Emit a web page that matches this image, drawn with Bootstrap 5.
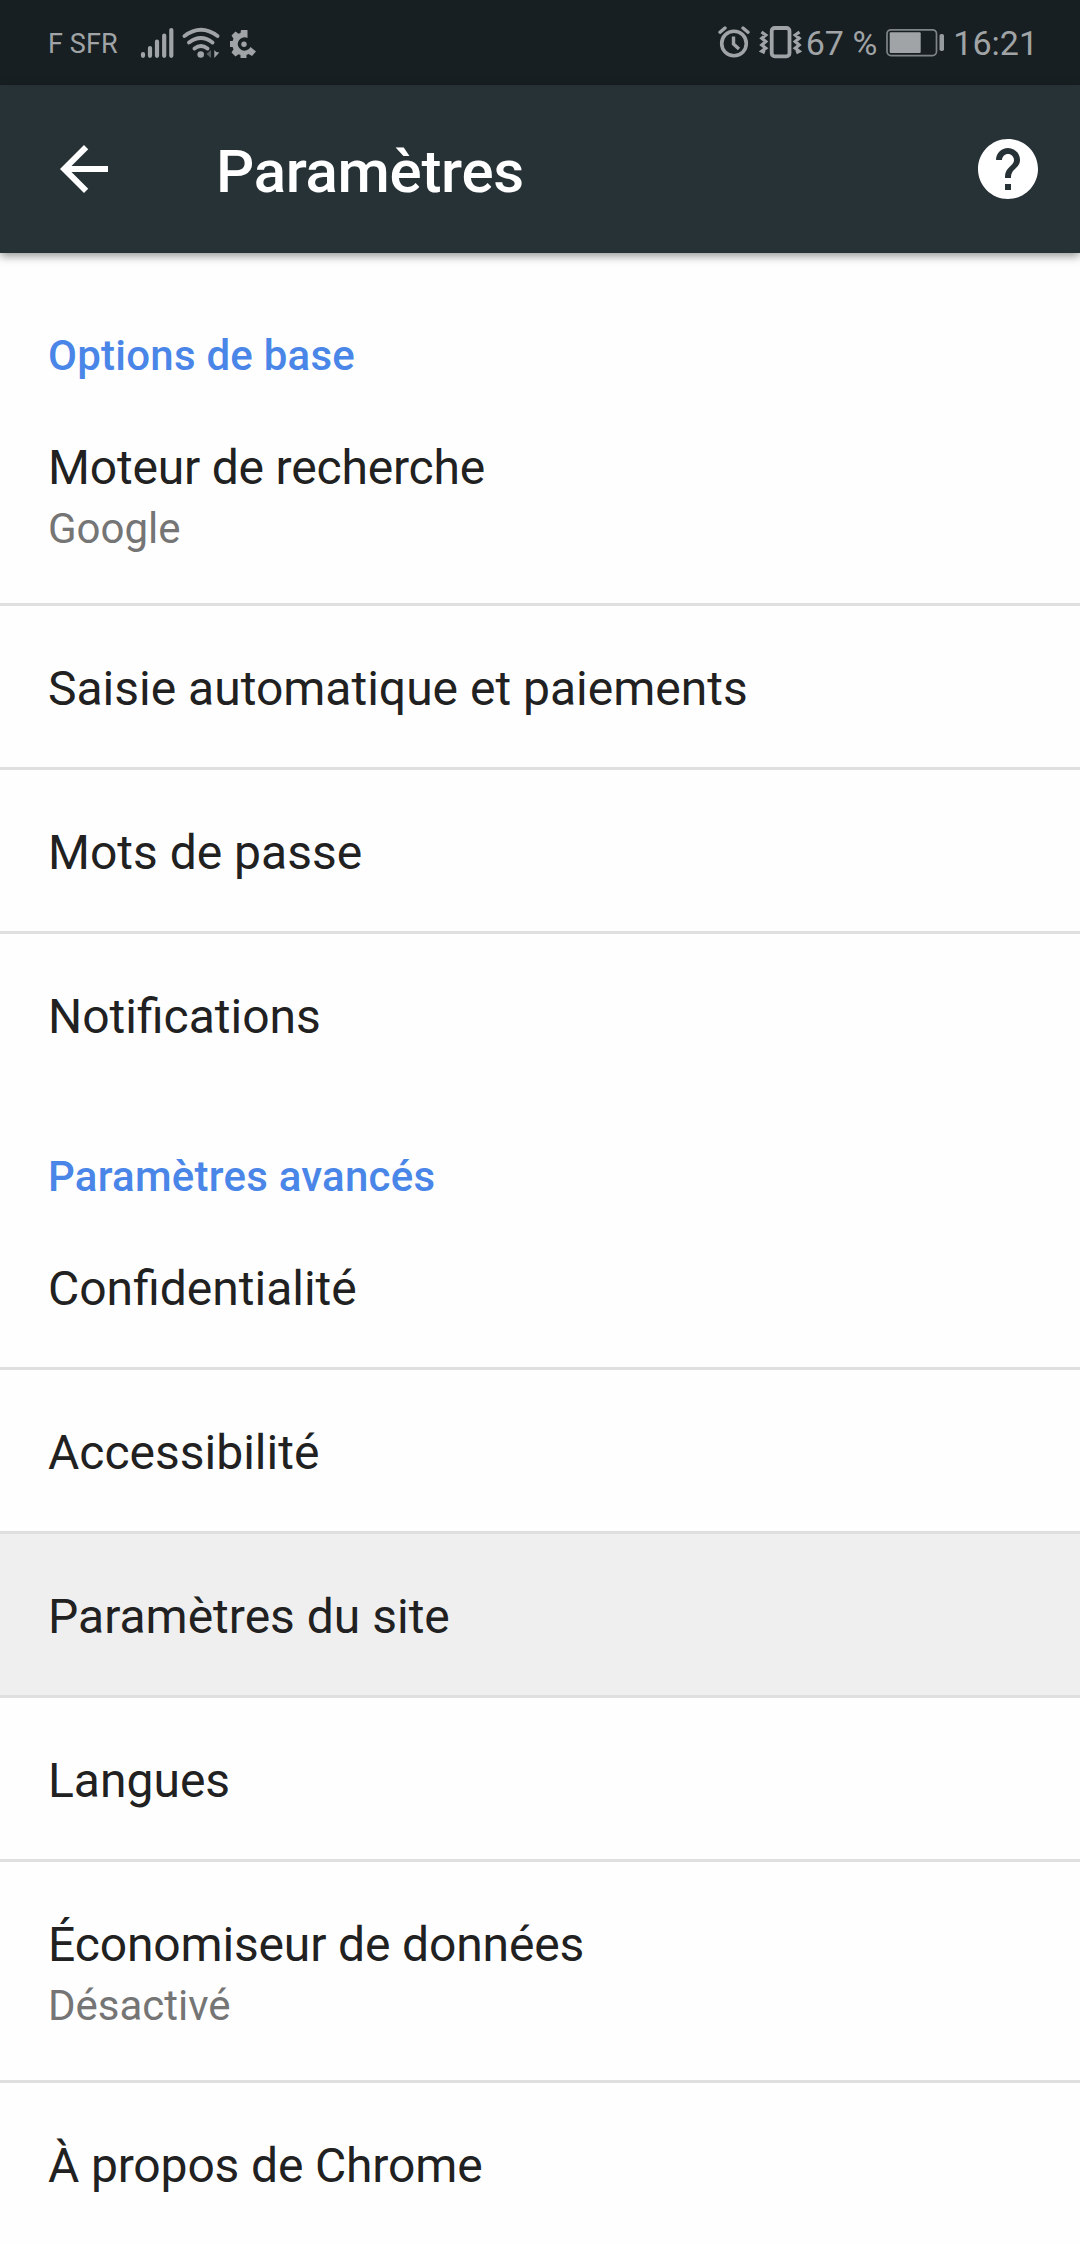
<!DOCTYPE html>
<html lang="fr">
<head>
<meta charset="utf-8">
<meta name="viewport" content="width=device-width, initial-scale=1">
<title>Paramètres</title>
<link href="https://cdn.jsdelivr.net/npm/bootstrap@5.3.0/dist/css/bootstrap.min.css" rel="stylesheet">
<style>
  body { font-family: Roboto, "Noto Sans", sans-serif; color: #212121; background: #fefefe; overflow: hidden; height: 2244px; }
  .statusbar { height: 85px; background: #181f22; color: #a0a4a6; padding: 0 42px 0 48px; }
  .statusbar svg { display: block; flex: none; }
  .carrier { font-size: 27px; line-height: 32px; width: 92px; padding-top: 2px; letter-spacing: .1px; }
  .stat-text { font-size: 34px; line-height: 40px; white-space: nowrap; }
  .vibrate { margin: 0 1px 0 6px; }
  .appbar { height: 168px; background: #273237; padding: 0 36px 0 48px; box-shadow: 0 3px 9px rgba(0,0,0,.42); z-index: 2; }
  .appbar svg { display: block; flex: none; }
  .appbar-title { font-size: 60px; font-weight: 500; line-height: 70px; letter-spacing: -.3px; margin: 5px auto 0 96px; }
  .section-title { font-size: 42px; font-weight: 500; line-height: 49px; letter-spacing: .24px; color: #4a86e8; padding: 78px 48px 5px; margin: 0; }
  .section-title.later { padding-top: 57px; }
  .settings .list-group-item { border: 0; border-bottom: 3px solid #dfdfdf; padding: 55px 48px 50px; background: transparent; color: #212121; font-size: 48px; line-height: 56px; }
  .settings .list-group-item:last-child { border-bottom: 0; }
  .settings .list-group-item.pressed { background: #efefef; }
  .tight { letter-spacing: -.15px; }
  .tighter { letter-spacing: -.19px; }
  .summary { font-size: 42px; line-height: 49px; color: #757575; padding-top: 8px; }
</style>
</head>
<body>
<div class="statusbar d-flex align-items-center justify-content-between">
  <div class="d-flex align-items-center">
    <span class="carrier">F SFR</span>
    <svg width="34" height="32" viewBox="140 26 34 32" fill="none" stroke="#a0a4a6" stroke-width="4.2" stroke-linecap="round"><path d="M143 53v1.8M150 47v7.8M157 40.5v14.3M164.2 34.5v20.3M171.3 29v25.800"/></svg>
    <svg class="ms-2" width="40" height="32" viewBox="182 26 40 32" fill="none" stroke="#a0a4a6" stroke-width="3.800" stroke-linecap="round"><path d="M184.500 35Q201 22.500 217.500 35M189 41.500Q201 32.500 212.500 41.500M194.500 47.500Q201 42.500 207.500 47.500"/><circle cx="200.700" cy="53.500" r="3.300" fill="#a0a4a6" stroke="none"/><path d="M211 49v8l-4.500-4z" fill="#596063" stroke="none"/><path d="M214.300 49v8l5-5.500-3-.5z" fill="#a0a4a6" stroke="none"/></svg>
    <svg class="ms-2" width="30" height="32" viewBox="231 26 30 32" fill="#a0a4a6"><path d="M242 29h6.500v8A6.700 6.700 0 1 0 251.500 46l5.500 4.500-4 4.500-3.500-2-2 1v3h-6v-3l-2-.8-3 2.200-4-4 2-3.200-.9-2.200H231v-6h2.600l.9-2.200-2-3.200 4-4 3 2.200 2-.8z"/><circle cx="245" cy="43.200" r="2.700"/></svg>
  </div>
  <div class="d-flex align-items-center">
    <svg width="34" height="34" viewBox="717 26 34 34" fill="none" stroke="#a0a4a6"><circle cx="734" cy="43.500" r="12.300" stroke-width="3.600"/><path d="M733.500 36.500v7.500l5.500 5" stroke-width="3.400"/><path d="M720 32.200l5-4.200M748 32.200l-5-4.200" stroke-width="3.400" stroke-linecap="round"/></svg>
    <svg class="vibrate" width="48" height="34" viewBox="757 26 48 34" fill="none" stroke="#a0a4a6" stroke-width="3.200"><rect x="771.700" y="28" width="17.800" height="28.300" rx="3" stroke-width="3.800"/><path d="M761.500 32l4.300 3-4 3.300 4 3.300-4 3.300 4 3.300-4 3 3 1.500M799.500 32l-4.300 3 4 3.300-4 3.300 4 3.300-4 3.300 4 3-3 1.500"/></svg>
    <span class="stat-text">67 %</span>
    <svg class="ms-2" width="60" height="30" viewBox="885 28 60 30"><rect x="887" y="29.800" width="49.500" height="25.800" rx="4" fill="none" stroke="#7f8587" stroke-width="1.700"/><rect x="889.700" y="32.300" width="31" height="20.700" rx="1" fill="#a0a4a6"/><rect x="939.500" y="34" width="4.500" height="17" rx="1.800" fill="#969b9d"/></svg>
    <span class="stat-text ms-2">16:21</span>
  </div>
</div>
<header class="appbar d-flex align-items-center position-relative">
  <svg width="72" height="72" viewBox="0 0 24 24" fill="#fff" role="img" aria-label="Retour"><path d="M20 11H7.830l5.590-5.590L12 4l-8 8 8 8 1.410-1.410L7.830 13H20v-2z"/></svg>
  <h1 class="appbar-title text-white">Paramètres</h1>
  <svg width="72" height="72" viewBox="0 0 24 24" fill="#fff" role="img" aria-label="Aide"><path d="M12 2C6.480 2 2 6.480 2 12s4.480 10 10 10 10-4.480 10-10S17.520 2 12 2zm1 17h-2v-2h2v2zm2.070-7.750l-.9.920C13.450 12.900 13 13.500 13 15h-2v-.5c0-1.100.45-2.100 1.170-2.830l1.240-1.260c.37-.36.59-.86.59-1.410 0-1.100-.9-2-2-2s-2 .9-2 2H8c0-2.210 1.790-4 4-4s4 1.790 4 4c0 .88-.36 1.680-.93 2.250z"/></svg>
</header>
<main class="settings">
  <h2 class="section-title">Options de base</h2>
  <div class="list-group list-group-flush">
    <div class="list-group-item"><span class="tighter">Moteur de recherche</span><div class="summary">Google</div></div>
    <div class="list-group-item">Saisie automatique et paiements</div>
    <div class="list-group-item">Mots de passe</div>
    <div class="list-group-item">Notifications</div>
  </div>
  <h2 class="section-title later">Paramètres avancés</h2>
  <div class="list-group list-group-flush">
    <div class="list-group-item">Confidentialité</div>
    <div class="list-group-item">Accessibilité</div>
    <div class="list-group-item pressed">Paramètres du site</div>
    <div class="list-group-item">Langues</div>
    <div class="list-group-item"><span class="tight">Économiseur de données</span><div class="summary">Désactivé</div></div>
    <div class="list-group-item"><span class="tight">À propos de Chrome</span></div>
  </div>
</main>
<script src="https://cdn.jsdelivr.net/npm/bootstrap@5.3.0/dist/js/bootstrap.bundle.min.js"></script>
</body>
</html>
